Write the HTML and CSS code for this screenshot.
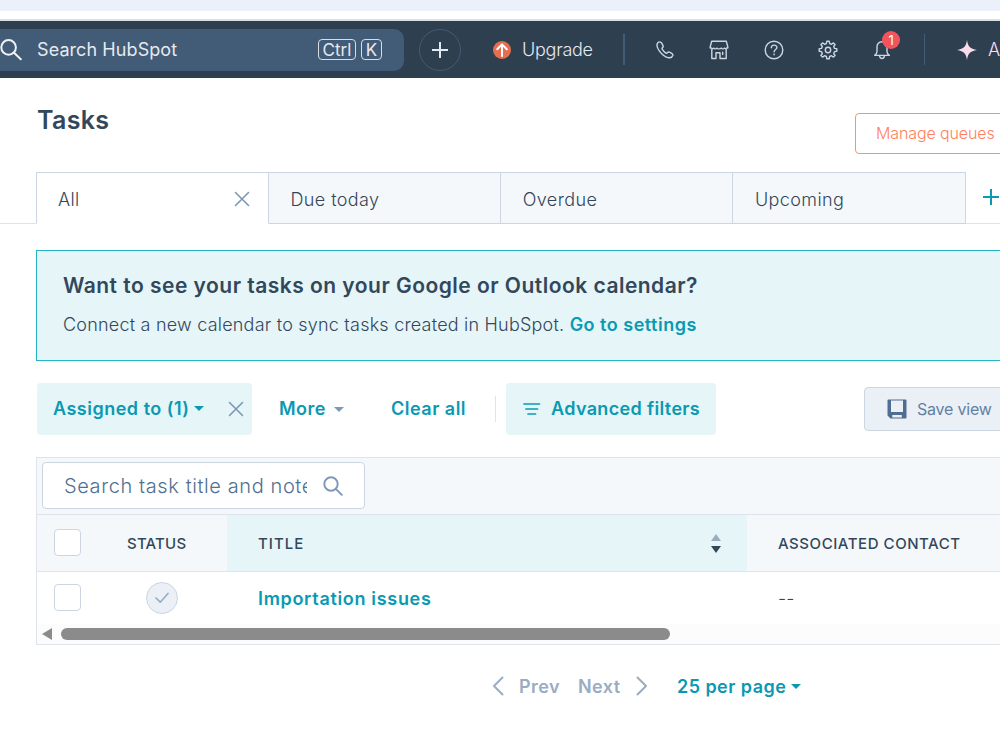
FILE: index.html
```html
<!DOCTYPE html>
<html lang="en">
<head>
  <meta charset="UTF-8" />
  <meta name="viewport" content="width=device-width, initial-scale=1.0"/>
  <title>Tasks</title>
  <link rel="stylesheet" href="styles.css">
</head>
<body>
  <div class="browser-strip"></div>

  <nav class="navbar">
    <div class="nav-search">
      <svg class="nav-search-icon" width="22" height="22" viewBox="0 0 22 22"><circle cx="8.6" cy="8.4" r="7.3"/><path d="M13.8 13.6l7 6.6"/></svg>
      <span class="nav-search-text">Search HubSpot</span>
      <kbd class="key-ctrl">Ctrl</kbd>
      <kbd class="key-k">K</kbd>
    </div>
    <button class="nav-add">
      <svg width="16" height="16" viewBox="0 0 16 16"><path d="M8 .5v15M.5 8h15"/></svg>
    </button>
    <div class="upgrade">
      <svg width="18" height="18" viewBox="0 0 18 18"><circle cx="9" cy="9" r="9"/><path d="M9 15V3.6M4.2 8.2L9 3.4l4.8 4.8"/></svg>
      <span class="upgrade-text">Upgrade</span>
    </div>
    <div class="nav-icons">
      <svg width="20" height="20" viewBox="0 0 20 20"><path d="M5.6 2.2C4.700 1.700 3.500 2 2.700 3C1.400 4.600 2 7.500 4.300 10.800C6.800 14.300 10.500 17.200 13.700 17.700C15.600 18 17.300 17 17.800 15.500C18.100 14.500 17.600 13.800 16.700 13.300L14.600 12.200C13.700 11.700 12.900 12 12.400 12.700C11.900 13.500 11.300 13.400 10.600 12.900C9.300 12 8 10.600 7.200 9.200C6.800 8.500 6.900 8.100 7.500 7.600C8.300 7 8.300 6.200 7.900 5.400L6.700 3.100C6.400 2.600 6 2.300 5.600 2.200Z"/></svg>
      <svg width="20" height="20" viewBox="0 0 20 20"><path d="M2.700 1.300h14.600l1.500 5.400v1.300h-1.300c-.6 1-1.600 1-2.200 0c-.7 1.200-2.500 1.200-3.200 0c-.7 1.200-3.500 1.200-4.200 0c-.7 1.200-2.500 1.200-3.200 0c-.6 1-1.600 1-2.200 0H1.200V6.700zM2.800 9.500v9h4.200v-5.800h4v5.800h6.200v-9M13.700 12.300v2.200"/></svg>
      <svg width="20" height="20" viewBox="0 0 20 20"><circle cx="10" cy="10" r="8.800"/><path d="M7.300 7.800c0-3.600 5.600-3.500 5.600-.3c0 2-2.800 2-2.800 4.300M10.100 14v.8"/></svg>
      <svg width="20" height="20" viewBox="0 0 20 20"><circle cx="10" cy="10" r="2.700"/><path d="M8.400 3.500l.4-2.300h2.400l.4 2.300l1.900.8l1.900-1.400l1.700 1.700l-1.400 1.900l.8 1.900l2.300.4v2.400l-2.300.4l-.8 1.900l1.400 1.900l-1.700 1.700l-1.900-1.400l-1.900.8l-.4 2.300H8.800l-.4-2.300l-1.900-.8l-1.900 1.400l-1.700-1.700l1.400-1.900l-.8-1.900l-2.300-.4V8.800l2.300-.4l.8-1.900l-1.400-1.900l1.700-1.700l1.900 1.400z"/></svg>
      <div class="bell">
        <svg width="20" height="20" viewBox="0 0 20 20"><path d="M10 1.800C6.900 1.800 5 4 5 7v4.500c0 1.500-.8 2.600-2.300 3.900h14.600c-1.500-1.300-2.300-2.400-2.300-3.900V7c0-3-1.900-5.200-5-5.200zM7.600 16c.2 3.300 4.600 3.300 4.800 0"/></svg>
        <span class="badge">1</span>
      </div>
    </div>
    <div class="assistant">
      <svg width="20" height="20" viewBox="0 0 20 20"><path d="M10 0c1 6.500 3 8.800 10 10c-7 1.200-9 3.500-10 10c-1-6.500-3-8.800-10-10c7-1.200 9-3.500 10-10z"/></svg>
      <span>A</span>
    </div>
  </nav>

  <header class="page-header">
    <h1>Tasks</h1>
    <button class="manage-btn">Manage queues</button>
  </header>

  <div class="tabs">
    <div class="tab active">
      <span>All</span>
      <svg class="close" width="16" height="16" viewBox="0 0 16 16"><path d="M1.500 1.500l13 13M14.500 1.500l-13 13"/></svg>
    </div>
    <div class="tab"><span>Due today</span></div>
    <div class="tab"><span>Overdue</span></div>
    <div class="tab"><span>Upcoming</span></div>
    <div class="tab-add">
      <svg width="16" height="16" viewBox="0 0 16 16"><path d="M8 .5v15M.5 8h15"/></svg>
    </div>
  </div>

  <section class="banner">
    <h2>Want to see your tasks on your Google or Outlook calendar?</h2>
    <p>Connect a new calendar to sync tasks created in HubSpot. <a>Go to settings</a></p>
  </section>

  <div class="filters">
    <div class="chip assigned">
      <span>Assigned to (1)</span>
      <i class="caret"></i>
      <svg class="close" width="16" height="16" viewBox="0 0 16 16"><path d="M1.500 1.500l13 13M14.500 1.500l-13 13"/></svg>
    </div>
    <div class="more"><span>More</span><i class="caret"></i></div>
    <span class="clear">Clear all</span>
    <div class="chip advanced">
      <svg width="18" height="14" viewBox="0 0 18 14"><path d="M1 2h15.500M3 7h11.500M5 12h7.500"/></svg>
      <span class="advanced-text">Advanced filters</span>
    </div>
    <button class="save-btn">
      <svg width="20" height="20" viewBox="0 0 20 20"><path fill-rule="evenodd" d="M1.500 0.500h17a1 1 0 0 1 1 1v17a1 1 0 0 1-1 1H3.500l-3-3v-15a1 1 0 0 1 1-1zM4 1.500v11.500h12V1.500zM5.300 16v2.500h9.500v-2.500z"/></svg>
      <span>Save view</span>
    </button>
  </div>

  <div class="table">
    <div class="toolbar">
      <div class="search-box">
        <span class="search-text">Search task title and notes</span>
        <svg width="20" height="20" viewBox="0 0 20 20"><circle cx="8" cy="8" r="6.700"/><path d="M12.800 12.800l6 6"/></svg>
      </div>
    </div>
    <div class="row head">
      <div class="cell check"><span class="checkbox"></span></div>
      <div class="cell status"><span class="th-status">STATUS</span></div>
      <div class="cell title">
        <span class="th-title">TITLE</span>
        <svg width="10" height="19" viewBox="0 0 10 19"><path class="sort-up" d="M5 0l5 7H0z"/><path class="sort-down" d="M5 19l5-7H0z"/></svg>
      </div>
      <div class="cell contact"><span class="th-contact">ASSOCIATED CONTACT</span></div>
    </div>
    <div class="row">
      <div class="cell check"><span class="checkbox"></span></div>
      <div class="cell status">
        <span class="done"><svg width="14" height="12" viewBox="0 0 14 12"><path d="M1 6l4.200 4.200L13 1.500"/></svg></span>
      </div>
      <div class="cell title"><a class="task-link">Importation issues</a></div>
      <div class="cell contact"><span class="empty">--</span></div>
    </div>
    <div class="scrollbar">
      <i class="scroll-arrow"></i>
      <span class="thumb"></span>
    </div>
  </div>

  <div class="pagination">
    <svg width="12" height="20" viewBox="0 0 12 20"><path d="M10.500 1.500L2 10l8.500 8.500"/></svg>
    <span class="prev">Prev</span>
    <span class="next">Next</span>
    <svg width="12" height="20" viewBox="0 0 12 20"><path d="M1.500 1.500L10 10l-8.500 8.500"/></svg>
    <span class="per-page">25 per page</span>
    <i class="caret"></i>
  </div>
</body>
</html>
```
FILE: styles.css
```css
* {
  margin: 0;
  padding: 0;
  box-sizing: border-box;
}
body {
  font-family: Inter, 'Open Sans', sans-serif;
  font-size: 18px;
  font-weight: 300;
  color: #33475b;
  background: #fff;
  height: 750px;
  overflow: hidden;
}
button {
  font: inherit;
  cursor: pointer;
}
svg {
  display: block;
  flex: none;
  fill: none;
  stroke-linecap: round;
  stroke-linejoin: round;
}
span,
h1,
h2,
a {
  white-space: nowrap;
}
.caret {
  flex: none;
  border: 5px solid transparent;
  border-top: 5px solid #0a99b2;
  border-bottom: 0;
}

/* top bar */
.browser-strip {
  height: 21px;
  background: linear-gradient(#ebf0fa 11px, #fff 11px, #fff 19px, #d9e1e2 19px);
}
.navbar {
  height: 57px;
  display: flex;
  align-items: center;
  background: #2e3f50;
  color: #e5eaf0;
  overflow: hidden;
}
.nav-search {
  width: 404px;
  height: 42px;
  flex: none;
  display: flex;
  align-items: center;
  background: #425b76;
  border-radius: 0 10px 10px 0;
}
.nav-search-icon {
  stroke: #eef2f6;
  stroke-width: 2;
}
.nav-search-text {
  margin-left: 15px;
  width: 266px;
  font-weight: 400;
  letter-spacing: 0.08px;
}
kbd {
  height: 21px;
  margin-left: 15px;
  border: 1px solid #d5dde5;
  border-radius: 4px;
  font: 400 17px/20px Inter, sans-serif;
  text-align: center;
}
.key-ctrl {
  width: 38px;
}
.key-k {
  width: 21px;
  margin-left: 5px;
}
.nav-add {
  width: 42px;
  height: 42px;
  margin-left: 15px;
  flex: none;
  display: flex;
  align-items: center;
  justify-content: center;
  background: none;
  border: 1px solid #425b76;
  border-radius: 50%;
}
.nav-add svg {
  stroke: #e5eaf0;
  stroke-width: 2;
}
.upgrade {
  width: 164px;
  height: 31px;
  padding-left: 32px;
  flex: none;
  display: flex;
  align-items: center;
  gap: 11px;
  border-right: 2px solid #425b76;
}
.upgrade-text {
  letter-spacing: -0.25px;
}
.upgrade circle {
  fill: #e66e50;
}
.upgrade path {
  stroke: #fff;
  stroke-width: 2;
}
.nav-icons {
  width: 300px;
  height: 31px;
  padding-left: 30px;
  flex: none;
  display: flex;
  align-items: center;
  gap: 34.300px;
  border-right: 1px solid #425b76;
}
.nav-icons svg {
  stroke: #cbd6e2;
  stroke-width: 1.400;
}
.bell {
  position: relative;
}
.badge {
  position: absolute;
  left: 10px;
  top: -9px;
  width: 18px;
  height: 18px;
  border-radius: 50%;
  background: #f2545b;
  color: #fff;
  font-size: 13px;
  font-weight: 400;
  line-height: 18px;
  text-align: center;
}
.assistant {
  margin-left: 32px;
  display: flex;
  align-items: center;
  gap: 11px;
  color: #fcdcef;
}
.assistant path {
  fill: #fcdcea;
}

/* title row */
.page-header {
  height: 94px;
  padding: 0 0 0 37px;
  display: flex;
  justify-content: space-between;
  overflow: hidden;
}
h1 {
  margin-top: 26px;
  font-size: 25px;
  font-weight: 600;
  line-height: 32px;
  letter-spacing: 0.3px;
}
.manage-btn {
  width: 160px;
  height: 41px;
  margin: 35px -15px 0 0;
  padding: 0 0 1px 20px;
  text-align: left;
  font-size: 16px;
  letter-spacing: -0.12px;
  color: #ff7f60;
  background: #fff;
  border: 1px solid #ff8f73;
  border-radius: 4px;
}

/* tabs */
.tabs {
  height: 52px;
  display: flex;
  letter-spacing: 0.4px;
  overflow: hidden;
}
.tabs::before {
  content: "";
  width: 36px;
  flex: none;
  border-bottom: 1px solid #dfe3eb;
}
.tab {
  width: 232.200px;
  flex: none;
  padding: 2px 0 0 21.500px;
  display: flex;
  align-items: center;
  background: #f5f8fa;
  border: 1px solid #cbd6e2;
  border-left: 0;
}
.tab.active {
  width: 233px;
  padding-left: 21px;
  padding-right: 18px;
  justify-content: space-between;
  background: #fff;
  border-left: 1px solid #cbd6e2;
  border-bottom-color: #fff;
}
.close {
  stroke: #7c98b6;
  stroke-width: 1.600;
}
.tab-add {
  flex: 1;
  padding: 17px 0 0 17px;
  border-bottom: 1px solid #dfe3eb;
}
.tab-add svg {
  stroke: #0a99b2;
  stroke-width: 2;
}

/* calendar banner */
.banner {
  height: 111px;
  margin: 26px 0 0 36px;
  padding: 20px 26px;
  background: #e5f5f8;
  border: 1px solid #24b6c6;
  border-right: 0;
}
h2 {
  font-size: 21px;
  font-weight: 600;
  line-height: 29px;
  letter-spacing: 0.48px;
}
.banner p {
  margin-top: 11px;
  line-height: 27px;
  letter-spacing: 0.21px;
  white-space: nowrap;
}
.banner a {
  font-weight: 600;
  letter-spacing: 0.5px;
  color: #0a99b2;
}

/* filters */
.filters {
  height: 52px;
  margin: 22px 0 0 37px;
  display: flex;
  align-items: center;
  font-weight: 600;
  letter-spacing: 0.5px;
  line-height: 24px;
  color: #0a99b2;
  overflow: hidden;
}
.chip {
  height: 52px;
  flex: none;
  display: flex;
  align-items: center;
  padding-bottom: 1px;
  background: #e5f5f8;
  border-radius: 4px;
}
.assigned {
  width: 215px;
  padding-left: 16px;
  padding-right: 8px;
}
.assigned .caret {
  margin-left: 4px;
}
.assigned .close {
  margin-left: auto;
}
.more {
  width: 112px;
  margin-left: 27px;
  flex: none;
  display: flex;
  align-items: center;
  gap: 8px;
}
.more .caret {
  border-top-color: #7c98b6;
}
.clear {
  width: 105px;
  flex: none;
  line-height: 26px;
  border-right: 1px solid #dfe3eb;
}
.advanced {
  width: 210px;
  margin-left: 10px;
  padding-left: 17px;
  gap: 10px;
}
.advanced-text {
  letter-spacing: 0.35px;
}
.advanced path {
  stroke: #0a99b2;
  stroke-width: 1.700;
}
.save-btn {
  width: 150px;
  height: 44px;
  margin-left: 148px;
  padding-left: 22px;
  flex: none;
  display: flex;
  align-items: center;
  gap: 10px;
  font-size: 16px;
  font-weight: 400;
  letter-spacing: -0.2px;
  color: #6480a0;
  background: #eaf0f6;
  border: 1px solid #cbd6e2;
  border-radius: 4px;
}
.save-btn path {
  fill: #506e91;
}

/* table */
.table {
  height: 188px;
  margin: 22px 0 0 36px;
  border: 1px solid #dfe3eb;
  border-right: 0;
  overflow: hidden;
}
.toolbar {
  height: 57px;
  padding: 4px 5px;
  background: #f5f8fa;
  border-bottom: 1px solid #dfe3eb;
}
.search-box {
  width: 323px;
  height: 47px;
  padding: 0 21px;
  display: flex;
  align-items: center;
  justify-content: space-between;
  background: #fff;
  border: 1px solid #cbd6e2;
  border-radius: 4px;
}
.search-text {
  width: 243px;
  overflow: hidden;
  font-size: 20px;
  letter-spacing: 0.6px;
  color: #516f90;
}
.search-box svg {
  stroke: #7c98b6;
  stroke-width: 1.900;
}
.row {
  height: 52px;
  display: grid;
  grid-template-columns: 60px 130px 520px 1fr;
}
.row.head {
  height: 57px;
  background: #f5f8fa;
  border-bottom: 1px solid #dfe3eb;
  font-size: 15px;
  font-weight: 500;
}
.cell {
  display: flex;
  align-items: center;
}
.check {
  padding: 0 0 1px 17px;
}
.checkbox {
  width: 27px;
  height: 27px;
  background: #fff;
  border: 1px solid #cbd6e2;
  border-radius: 4px;
}
.status {
  padding-left: 30px;
}
.th-status {
  letter-spacing: 0.2px;
}
.title {
  padding: 0 26px 0 31px;
  justify-content: space-between;
}
.head .title {
  background: #e5f5f8;
}
.th-title {
  letter-spacing: 1px;
}
.th-contact {
  letter-spacing: 0.55px;
}
.sort-up {
  fill: #99acc2;
}
.sort-down {
  fill: #33475b;
}
.contact {
  padding-left: 31px;
}
.done {
  width: 32px;
  height: 32px;
  margin-left: 18.500px;
  display: flex;
  align-items: center;
  justify-content: center;
  background: #eaf0f6;
  border: 1px solid #cbd6e2;
  border-radius: 50%;
}
.done path {
  stroke: #99acc2;
  stroke-width: 1.700;
}
.task-link {
  font-weight: 600;
  letter-spacing: 0.68px;
  color: #0a99b2;
}
.scrollbar {
  height: 20px;
  padding-left: 5px;
  display: flex;
  align-items: center;
  background: #fcfcfc;
}
.scroll-arrow {
  border: 6px solid transparent;
  border-right: 10px solid #8b8b8b;
  border-left: 0;
}
.thumb {
  width: 609px;
  height: 12px;
  margin-left: 9px;
  border-radius: 6px;
  background: #8b8b8b;
}

/* pagination */
.pagination {
  height: 28px;
  margin: 27px 0 0 492px;
  display: flex;
  align-items: center;
  font-weight: 600;
  letter-spacing: 0.45px;
  color: #99acc2;
}
.pagination svg {
  stroke: #99acc2;
  stroke-width: 2;
}
.prev {
  width: 59px;
  margin-left: 15px;
}
.next {
  width: 58px;
}
.per-page {
  margin-left: 29px;
  color: #0a99b2;
}
.pagination .caret {
  margin-left: 5px;
}
```
